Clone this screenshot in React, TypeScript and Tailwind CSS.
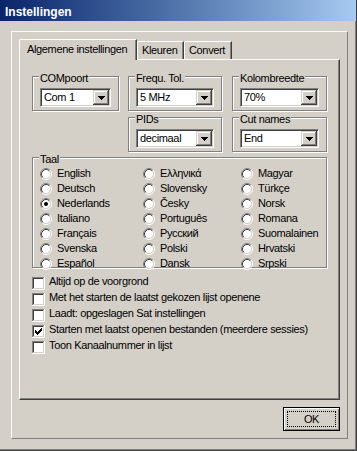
import React from 'react';

const talen = [
  ['English', 'Ελληνικά', 'Magyar'],
  ['Deutsch', 'Slovensky', 'Türkçe'],
  ['Nederlands', 'Česky', 'Norsk'],
  ['Italiano', 'Português', 'Romana'],
  ['Français', 'Русский', 'Suomalainen'],
  ['Svenska', 'Polski', 'Hrvatski'],
  ['Español', 'Dansk', 'Srpski'],
];

const opties = [
  { label: 'Altijd op de voorgrond', checked: false },
  { label: 'Met het starten de laatst gekozen lijst openene', checked: false },
  { label: 'Laadt: opgeslagen Sat instellingen', checked: false },
  { label: 'Starten met laatst openen bestanden (meerdere sessies)', checked: true },
  { label: 'Toon Kanaalnummer in lijst', checked: false },
];

function Radio({ checked }: { checked?: boolean }) {
  return (
    <svg width="12" height="12" viewBox="0 0 12 12" className="shrink-0">
      <circle cx="6" cy="6" r="4.5" fill="#fff" />
      <path d="M9.89 2.11 A5.5 5.5 0 0 0 2.11 9.89" fill="none" stroke="#808080" />
      <path d="M2.11 9.89 A5.5 5.5 0 0 0 9.89 2.11" fill="none" stroke="#fff" />
      <path d="M9.18 2.82 A4.5 4.5 0 0 0 2.82 9.18" fill="none" stroke="#404040" />
      <path d="M2.82 9.18 A4.5 4.5 0 0 0 9.18 2.82" fill="none" stroke="#D4D0C8" />
      {checked && <circle cx="6" cy="6" r="2" fill="#000" />}
    </svg>
  );
}

function Checkbox({ checked }: { checked?: boolean }) {
  // klassiek vinkje, 7x7 pixels
  const rows = ['......#', '.....##', '#...###', '##.###.', '#####..', '.###...', '..#....'];
  return (
    <svg width="13" height="13" viewBox="0 0 13 13" className="shrink-0" shapeRendering="crispEdges">
      <rect x="0" y="0" width="13" height="13" fill="#fff" />
      <rect x="0" y="0" width="12" height="1" fill="#808080" />
      <rect x="0" y="0" width="1" height="12" fill="#808080" />
      <rect x="1" y="1" width="10" height="1" fill="#404040" />
      <rect x="1" y="1" width="1" height="10" fill="#404040" />
      <rect x="1" y="11" width="11" height="1" fill="#D4D0C8" />
      <rect x="11" y="1" width="1" height="11" fill="#D4D0C8" />
      {checked &&
        rows.map((r, y) =>
          r.split('').map((c, x) => (c === '#' ? <rect key={`${x}-${y}`} x={3 + x} y={3 + y} width="1" height="1" fill="#000" /> : null))
        )}
    </svg>
  );
}

function Combo({ value }: { value: string }) {
  return (
    <div className="flex h-[19px] w-full border border-t-[#808080] border-l-[#808080] border-r-white border-b-white bg-white p-px shadow-[inset_1px_1px_0_#404040,inset_-1px_-1px_0_#D4D0C8]">
      <span className="flex-1 pl-[2px] leading-[15px]">{value}</span>
      <div className="flex h-[15px] w-[16px] items-center justify-center bg-[#D4D0C8] shadow-[inset_-1px_-1px_0_#404040,inset_1px_1px_0_#D4D0C8,inset_-2px_-2px_0_#808080,inset_2px_2px_0_#fff]">
        <svg width="7" height="4" viewBox="0 0 7 4" shapeRendering="crispEdges">
          <path d="M0 0h7v1H0zM1 1h5v1H1zM2 2h3v1H2zM3 3h1v1H3z" fill="#000" />
        </svg>
      </div>
    </div>
  );
}

function Group({ label, className, children }: { label: string; className: string; children?: React.ReactNode }) {
  return (
    <div className={`relative border border-[#808080] shadow-[inset_1px_1px_0_#fff,1px_1px_0_#fff] ${className}`}>
      <span className="absolute left-[6px] top-[-5px] bg-[#D4D0C8] px-px leading-[13px]">{label}</span>
      {children}
    </div>
  );
}

export default function App() {
  return (
    <div className="h-[451px] w-[357px] overflow-hidden border-r border-b border-[#404040] bg-[#D4D0C8] [font-family:'Liberation_Sans',Arial,sans-serif] text-[11px] tracking-[-0.35px] text-black shadow-[inset_-1px_-1px_0_#808080]">
      <div className="h-[21px] bg-linear-to-r from-[#0A246A] to-[#A6CAF0] pl-[5px] pt-[5px] text-[12px] font-bold leading-[14px] tracking-normal text-white">
        Instellingen
      </div>

      <div className="ml-[11px] mt-[10px] flex h-[408px] w-[337px] flex-col border border-t-white border-l-white border-r-[#808080] border-b-[#808080] px-[7px] pt-[7px] pb-[7px]">
        {/* tabs */}
        <div className="flex items-end">
          <div className="relative z-10 -mb-px h-[21px] w-[118px] rounded-tl-[2px] border-l border-t border-r border-white border-r-[#404040] bg-[#D4D0C8] pl-[7px] pt-[3px] leading-[13px] shadow-[inset_-1px_0_0_#808080]">
            Algemene instellingen
          </div>
          <div className="h-[18px] w-[47px] rounded-tl-[2px] border-l border-t border-r border-white border-r-[#404040] pl-[4px] pt-[2px] leading-[13px] shadow-[inset_-1px_0_0_#808080]">
            Kleuren
          </div>
          <div className="h-[18px] w-[48px] rounded-tl-[2px] border-l border-t border-r border-white border-r-[#404040] pl-[4px] pt-[2px] leading-[13px] shadow-[inset_-1px_0_0_#808080]">
            Convert
          </div>
        </div>

        <div className="h-[341px] w-[321px] border border-t-white border-l-white border-r-[#404040] border-b-[#404040] pl-[12px] pt-[16px] shadow-[inset_-1px_-1px_0_#808080]">
          <div className="flex">
            <Group label="COMpoort" className="h-[35px] w-[87px] px-[7px] pt-[11px]">
              <Combo value="Com 1" />
            </Group>
            <Group label="Frequ. Tol." className="ml-[9px] h-[35px] w-[94px] px-[7px] pt-[11px]">
              <Combo value="5 MHz" />
            </Group>
            <Group label="Kolombreedte" className="ml-[10px] h-[35px] w-[95px] px-[7px] pt-[11px]">
              <Combo value="70%" />
            </Group>
          </div>
          <div className="mt-[6px] flex pl-[96px]">
            <Group label="PIDs" className="h-[35px] w-[94px] px-[7px] pt-[11px]">
              <Combo value="decimaal" />
            </Group>
            <Group label="Cut names" className="ml-[10px] h-[35px] w-[95px] px-[7px] pt-[11px]">
              <Combo value="End" />
            </Group>
          </div>

          <Group label="Taal" className="mt-[5px] h-[111px] w-[295px] pl-[7px] pt-[8px]">
            <div className="grid grid-cols-[103px_98px_1fr]">
              {talen.flat().map((t) => (
                <div key={t} className="flex h-[15px] items-center gap-[5px]">
                  <Radio checked={t === 'Nederlands'} />
                  <span className="whitespace-nowrap leading-[13px]">{t}</span>
                </div>
              ))}
            </div>
          </Group>

          <div className="mt-[7px] flex flex-col">
            {opties.map((o) => (
              <div key={o.label} className="flex h-[16px] items-start gap-[4px]">
                <div className="mt-[2px]">
                  <Checkbox checked={o.checked} />
                </div>
                <span className="whitespace-nowrap leading-[13px]">{o.label}</span>
              </div>
            ))}
          </div>
        </div>

        <div className="mt-[7px] flex justify-end">
          <button className="flex h-[24px] w-[57px] items-center justify-center border border-black bg-[#D4D0C8] p-[3px] shadow-[inset_1px_1px_0_#fff,inset_-1px_-1px_0_#808080]">
            <span className="flex h-full w-full items-center justify-center border border-dotted border-black leading-[13px]">OK</span>
          </button>
        </div>
      </div>
    </div>
  );
}
